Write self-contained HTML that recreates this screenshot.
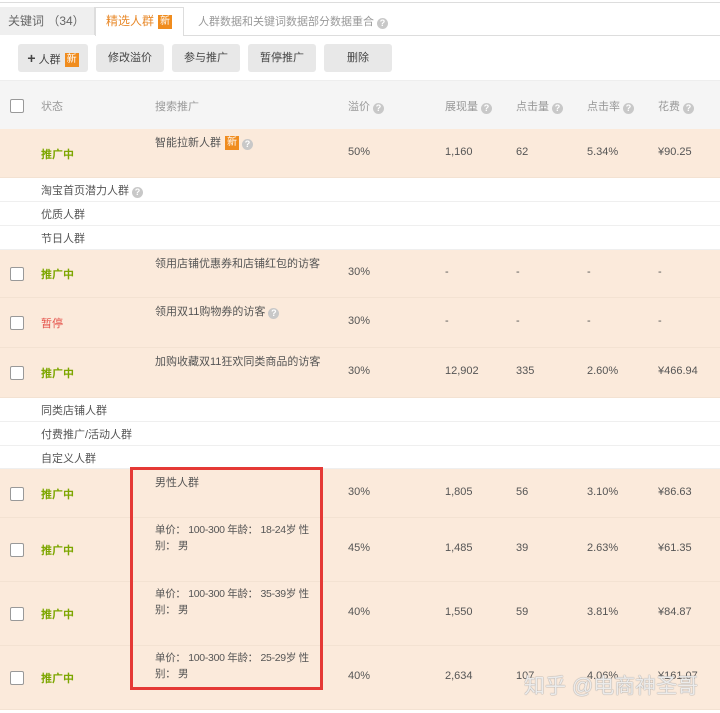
<!DOCTYPE html>
<html><head><meta charset="utf-8"><style>
*{margin:0;padding:0;box-sizing:border-box}
body{width:720px;height:713px;overflow:hidden;background:#fff;font-family:"Liberation Sans","Noto Sans CJK SC",sans-serif;font-size:11px;color:#555;position:relative}
.a{position:absolute;white-space:nowrap}
.row{position:absolute;left:0;width:720px}
.or{background:#fbeadb;border-bottom:1px solid #f3e2d2}
.wh{background:#fff;border-bottom:1px solid #efefef}
.cb{position:absolute;left:10px;width:14px;height:14px;border:1px solid #999;border-radius:2px;background:#fff}
.g{color:#7ca600;font-weight:bold}
.r{color:#e5534b}
.q{display:inline-block;width:11px;height:11px;border-radius:50%;background:#c8c8c8;color:#fff;font-size:9px;line-height:11px;text-align:center;vertical-align:-1px;margin-left:3px;font-weight:bold}
.new{display:inline-block;background:#f08c1e;color:#fff;font-size:10px;line-height:14px;padding:0 2px;margin-left:4px;vertical-align:1px}
.btn{position:absolute;top:44px;height:28px;background:#e8e8e8;border-radius:3px;text-align:center;line-height:28px;color:#444;font-size:11px}
.d{font-size:10.5px;letter-spacing:-0.3px}
</style></head><body>
<div class="a" style="left:0;top:2px;width:720px;height:1px;background:#ddd"></div>
<div class="a" style="left:0;top:7px;width:95px;height:28px;background:#efefef;border-right:1px solid #ddd;line-height:28px;padding-left:8px;font-size:12px;color:#666">关键词 （34）</div>
<div class="a" style="left:95px;top:7px;width:89px;height:29px;background:#fff;border:1px solid #ddd;border-bottom:none;line-height:27px;padding-left:10px;font-size:12px;color:#e8892a">精选人群<span class="new">新</span></div>
<div class="a" style="left:184px;top:35px;width:536px;height:1px;background:#ddd"></div>
<div class="a" style="left:198px;top:13px;color:#999;font-size:11px">人群数据和关键词数据部分数据重合<span class="q">?</span></div>
<div class="btn" style="left:18px;width:70px"><b style="font-size:14px">+</b> 人群<span class="new">新</span></div>
<div class="btn" style="left:96px;width:68px">修改溢价</div>
<div class="btn" style="left:172px;width:68px">参与推广</div>
<div class="btn" style="left:248px;width:68px">暂停推广</div>
<div class="btn" style="left:324px;width:68px">删除</div>

<div class="row" style="top:80px;height:49px;background:#f5f5f5;border-top:1px solid #eee;color:#999">
<div class="cb" style="top:18px"></div>
<div class="a" style="left:41px;top:17px">状态</div>
<div class="a" style="left:155px;top:17px">搜索推广</div>
<div class="a" style="left:348px;top:17px">溢价<span class="q">?</span></div>
<div class="a" style="left:445px;top:17px">展现量<span class="q">?</span></div>
<div class="a" style="left:516px;top:17px">点击量<span class="q">?</span></div>
<div class="a" style="left:587px;top:17px">点击率<span class="q">?</span></div>
<div class="a" style="left:658px;top:17px">花费<span class="q">?</span></div>
</div>

<div class="row or" style="top:129px;height:49px">
<div class="a g" style="left:41px;top:17px">推广中</div>
<div class="a" style="left:155px;top:5px">智能拉新人群<span class="new">新</span><span class="q">?</span></div>
<div class="a" style="left:348px;top:17px">50%</div><div class="a" style="left:445px;top:17px">1,160</div><div class="a" style="left:516px;top:17px">62</div><div class="a" style="left:587px;top:17px">5.34%</div><div class="a" style="left:658px;top:17px">¥90.25</div>
</div>
<div class="row wh" style="top:178px;height:24px"><div class="a" style="left:41px;top:4px">淘宝首页潜力人群<span class="q">?</span></div></div>
<div class="row wh" style="top:202px;height:24px"><div class="a" style="left:41px;top:4px">优质人群</div></div>
<div class="row wh" style="top:226px;height:24px"><div class="a" style="left:41px;top:4px">节日人群</div></div>

<div class="row or" style="top:250px;height:48px">
<div class="cb" style="top:17px"></div><div class="a g" style="left:41px;top:16px">推广中</div>
<div class="a" style="left:155px;top:5px">领用店铺优惠券和店铺红包的访客</div>
<div class="a" style="left:348px;top:16px">30%</div><div class="a" style="left:445px;top:16px">-</div><div class="a" style="left:516px;top:16px">-</div><div class="a" style="left:587px;top:16px">-</div><div class="a" style="left:658px;top:16px">-</div>
</div>
<div class="row or" style="top:298px;height:50px">
<div class="cb" style="top:18px"></div><div class="a r" style="left:41px;top:17px">暂停</div>
<div class="a" style="left:155px;top:5px">领用双11购物券的访客<span class="q">?</span></div>
<div class="a" style="left:348px;top:17px">30%</div><div class="a" style="left:445px;top:17px">-</div><div class="a" style="left:516px;top:17px">-</div><div class="a" style="left:587px;top:17px">-</div><div class="a" style="left:658px;top:17px">-</div>
</div>
<div class="row or" style="top:348px;height:50px">
<div class="cb" style="top:18px"></div><div class="a g" style="left:41px;top:17px">推广中</div>
<div class="a" style="left:155px;top:5px">加购收藏双11狂欢同类商品的访客</div>
<div class="a" style="left:348px;top:17px">30%</div><div class="a" style="left:445px;top:17px">12,902</div><div class="a" style="left:516px;top:17px">335</div><div class="a" style="left:587px;top:17px">2.60%</div><div class="a" style="left:658px;top:17px">¥466.94</div>
</div>
<div class="row wh" style="top:398px;height:24px"><div class="a" style="left:41px;top:4px">同类店铺人群</div></div>
<div class="row wh" style="top:422px;height:24px"><div class="a" style="left:41px;top:4px">付费推广/活动人群</div></div>
<div class="row wh" style="top:446px;height:23px"><div class="a" style="left:41px;top:4px">自定义人群</div></div>

<div class="row or" style="top:469px;height:49px">
<div class="cb" style="top:18px"></div><div class="a g" style="left:41px;top:17px">推广中</div>
<div class="a" style="left:155px;top:5px">男性人群</div>
<div class="a" style="left:348px;top:17px">30%</div><div class="a" style="left:445px;top:17px">1,805</div><div class="a" style="left:516px;top:17px">56</div><div class="a" style="left:587px;top:17px">3.10%</div><div class="a" style="left:658px;top:17px">¥86.63</div>
</div>
<div class="row or" style="top:518px;height:64px">
<div class="cb" style="top:25px"></div><div class="a g" style="left:41px;top:24px">推广中</div>
<div class="a d" style="left:155px;top:4px;line-height:16px">单价： 100-300 年龄： 18-24岁 性<br>别： 男</div>
<div class="a" style="left:348px;top:24px">45%</div><div class="a" style="left:445px;top:24px">1,485</div><div class="a" style="left:516px;top:24px">39</div><div class="a" style="left:587px;top:24px">2.63%</div><div class="a" style="left:658px;top:24px">¥61.35</div>
</div>
<div class="row or" style="top:582px;height:64px">
<div class="cb" style="top:25px"></div><div class="a g" style="left:41px;top:24px">推广中</div>
<div class="a d" style="left:155px;top:4px;line-height:16px">单价： 100-300 年龄： 35-39岁 性<br>别： 男</div>
<div class="a" style="left:348px;top:24px">40%</div><div class="a" style="left:445px;top:24px">1,550</div><div class="a" style="left:516px;top:24px">59</div><div class="a" style="left:587px;top:24px">3.81%</div><div class="a" style="left:658px;top:24px">¥84.87</div>
</div>
<div class="row or" style="top:646px;height:64px">
<div class="cb" style="top:25px"></div><div class="a g" style="left:41px;top:24px">推广中</div>
<div class="a d" style="left:155px;top:4px;line-height:16px">单价： 100-300 年龄： 25-29岁 性<br>别： 男</div>
<div class="a" style="left:348px;top:24px">40%</div><div class="a" style="left:445px;top:24px">2,634</div><div class="a" style="left:516px;top:24px">107</div><div class="a" style="left:587px;top:24px">4.06%</div><div class="a" style="left:658px;top:24px">¥161.07</div>
</div>
<div class="a" style="left:130px;top:467px;width:193px;height:223px;border:3px solid #e53935"></div>
<div class="a" style="left:524px;top:670px;font-size:21px;color:rgba(255,255,255,0.8);text-shadow:0 0 1px #999,0 0 1px #999">知乎 @电商神圣哥</div>
</body></html>
